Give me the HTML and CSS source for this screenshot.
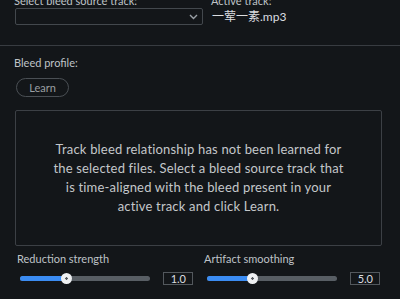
FILE: index.html
```html
<!DOCTYPE html>
<html>
<head>
    <title>Bleed Removal</title>
    <link rel="stylesheet" href="styles.css">
</head>
<body>
    <div class="panel">
        <div class="source">
            <div class="field">
                <div class="label">Select bleed source track:</div>
                <div class="select">
                    <svg class="chevron" width="9" height="6" viewBox="0 0 9 6">
                        <path d="M1 1 L4.5 4.5 L8 1" fill="none" stroke="#9aa0a6" stroke-width="1.4"/>
                    </svg>
                </div>
            </div>
            <div class="field active">
                <div class="label">Active track:</div>
                <div class="track-name">一荤一素.mp3</div>
            </div>
        </div>

        <div class="profile">
            <div class="label">Bleed profile:</div>
            <button class="learn">Learn</button>
            <div class="message">
                <p>Track bleed relationship has not been learned for the selected files. Select a bleed source track that is time-aligned with the bleed present in your active track and click Learn.</p>
            </div>
        </div>

        <div class="controls">
            <div class="control">
                <div class="label">Reduction strength</div>
                <div class="slider-row">
                    <div class="slider">
                        <div class="fill" style="width: 46px"></div>
                        <div class="thumb" style="left: 46px"></div>
                    </div>
                    <div class="value">1.0</div>
                </div>
            </div>
            <div class="control">
                <div class="label">Artifact smoothing</div>
                <div class="slider-row">
                    <div class="slider">
                        <div class="fill" style="width: 45px"></div>
                        <div class="thumb" style="left: 45px"></div>
                    </div>
                    <div class="value">5.0</div>
                </div>
            </div>
        </div>
    </div>
    <div class="edge"></div>
</body>
</html>
```

FILE: styles.css
```css
body {
    margin: 0;
    width: 400px;
    height: 299px;
    overflow: hidden;
    display: flex;
    background: #131619;
    font-family: Lato, "Noto Sans CJK SC", sans-serif;
    color: #c4c7ca;
}
.panel {
    flex: 1;
}
.edge {
    width: 1px;
    background: linear-gradient(to bottom, #2a5d9c 0, #2a5d9c 123px, #b0702a 123px, #8a5a22 175px, #0d0f12 175px, #0d0f12 195px, #2a5d9c 195px);
}
.label {
    font-size: 11px;
    line-height: 13px;
    color: #bfc3c7;
}
.source {
    display: flex;
    margin-top: -6px;
    padding: 0 0 0 15px;
    height: 51px;
    border-bottom: 1px solid #383c41;
    box-sizing: content-box;
}
.field {
    width: 188px;
}
.field .label {
    margin-left: -1px;
    margin-bottom: 1px;
}
.select {
    height: 15px;
    border: 1px solid #43484d;
    border-radius: 2px;
    display: flex;
    justify-content: flex-end;
    align-items: center;
    padding-right: 4px;
}
.active {
    margin-left: 9px;
}
.track-name {
    font-size: 12px;
    line-height: 16px;
    margin-top: 2px;
    color: #dcdee0;
}
.profile {
    padding: 10px 18px 0 15px;
}
.profile .label {
    margin-left: -1px;
}
.learn {
    display: block;
    margin: 9px 0 0 1px;
    width: 53px;
    height: 19px;
    padding: 0;
    border: 1px solid #4a4f54;
    border-radius: 10px;
    background: transparent;
    color: #9a9ea2;
    font-family: inherit;
    font-size: 11px;
}
.message {
    margin-top: 13px;
    height: 134px;
    border: 1px solid #3c4045;
    border-radius: 2px;
    display: flex;
    align-items: center;
    justify-content: center;
}
.message p {
    margin: 0;
    width: 298px;
    text-align: center;
    font-size: 13px;
    line-height: 19px;
    letter-spacing: 0.18px;
    color: #c4c7ca;
}
.controls {
    display: flex;
    padding: 6px 0 0 17px;
}
.control {
    width: 176px;
}
.control + .control {
    margin-left: 11px;
}
.slider-row {
    display: flex;
    align-items: center;
    margin-top: 7px;
}
.slider {
    position: relative;
    flex: none;
    margin-left: 3px;
    width: 130px;
    height: 5px;
    border-radius: 3px;
    background: #585e64;
}
.fill {
    height: 5px;
    border-radius: 3px;
    background: #3b8cf2;
}
.thumb {
    position: absolute;
    top: -3px;
    width: 11px;
    height: 11px;
    margin-left: -5px;
    border-radius: 50%;
    background: #eef0f2 radial-gradient(circle, #55595e 0, #55595e 1px, transparent 1.5px);
}
.value {
    flex: none;
    margin-left: 13px;
    width: 22px;
    height: 11px;
    border: 1px solid #53585d;
    font-size: 11px;
    line-height: 11px;
    text-align: right;
    padding-right: 6px;
    box-sizing: content-box;
    color: #dcdee0;
}
```
